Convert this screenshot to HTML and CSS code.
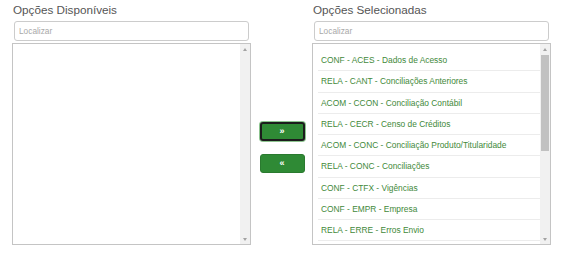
FILE: index.html
```html
<!DOCTYPE html>
<html>
  <head>
    <title>Opções</title>
    <link rel="stylesheet" href="styles.css">
  </head>
  <body>
    <div class="picker">
      <div class="column">
        <h3 class="column-title">Opções Disponíveis</h3>
        <input class="search" type="text" placeholder="Localizar">
        <div class="listbox">
          <ul class="options"></ul>
          <div class="scrollbar">
            <span class="arrow arrow-up"></span>
            <span class="track"></span>
            <span class="arrow arrow-down"></span>
          </div>
        </div>
      </div>
      <div class="moves">
        <button class="move focused">&raquo;</button>
        <button class="move">&laquo;</button>
      </div>
      <div class="column">
        <h3 class="column-title">Opções Selecionadas</h3>
        <input class="search" type="text" placeholder="Localizar">
        <div class="listbox">
          <ul class="options">
            <li>CONF - ACES - Dados de Acesso</li>
            <li>RELA - CANT - Conciliações Anteriores</li>
            <li>ACOM - CCON - Conciliação Contábil</li>
            <li>RELA - CECR - Censo de Créditos</li>
            <li>ACOM - CONC - Conciliação Produto/Titularidade</li>
            <li>RELA - CONC - Conciliações</li>
            <li>CONF - CTFX - Vigências</li>
            <li>CONF - EMPR - Empresa</li>
            <li>RELA - ERRE - Erros Envio</li>
          </ul>
          <div class="scrollbar">
            <span class="arrow arrow-up"></span>
            <span class="track"><span class="thumb"></span></span>
            <span class="arrow arrow-down"></span>
          </div>
        </div>
      </div>
    </div>
  </body>
</html>
```

FILE: styles.css
```css
body{
  margin: 0;
  background-color: white;
  font-family: "Liberation Sans", Arial, sans-serif;
}

.picker{
  display: flex;
  padding: 0 12px;
}

.column{
  width: 239px;
  display: flex;
  flex-direction: column;
}

.column-title{
  margin: 2px 0 3px 1px;
  font-size: 11.7px;
  line-height: 16px;
  font-weight: normal;
  color: #555;
}

.search{
  margin: 0 2px;
  height: 20px;
  box-sizing: border-box;
  padding: 0 4px;
  border: 1px solid #ccc;
  border-radius: 3px;
  font-family: inherit;
  font-size: 8.3px;
  color: #555;
}

.search::placeholder{
  color: #a8a8a8;
}

.listbox{
  margin-top: 2px;
  height: 202px;
  box-sizing: border-box;
  border: 1px solid #c4c4c4;
  display: flex;
  overflow: hidden;
}

.options{
  flex: 1;
  margin: 0;
  padding: 6px 0 0 5px;
  list-style: none;
  overflow: hidden;
}

.options li{
  height: 20.25px;
  line-height: 20.25px;
  padding-left: 3px;
  border-bottom: 1px solid #ececec;
  font-size: 8.4px;
  color: #42893a;
  white-space: nowrap;
}

.scrollbar{
  width: 10px;
  display: flex;
  flex-direction: column;
  background-color: #f1f1f1;
}

.arrow{
  height: 10px;
  display: flex;
  justify-content: center;
  align-items: center;
}

.arrow:before{
  content: "";
  border-left: 2.5px solid transparent;
  border-right: 2.5px solid transparent;
}

.arrow-up:before{
  border-bottom: 3px solid #a3a3a3;
}

.arrow-down:before{
  border-top: 3px solid #a3a3a3;
}

.track{
  flex: 1;
  display: flex;
  flex-direction: column;
}

.thumb{
  height: 96px;
  margin: 1px 1px 0 1px;
  background-color: #c1c1c1;
}

.moves{
  width: 61px;
  display: flex;
  flex-direction: column;
  align-items: center;
  row-gap: 13px;
  padding-top: 122px;
  padding-left: 1px;
  box-sizing: border-box;
}

.move{
  width: 45px;
  height: 19px;
  padding: 0;
  border: 1px solid #2a7a2f;
  border-radius: 3px;
  background-color: #2f8a35;
  color: white;
  font-family: inherit;
  font-size: 9px;
  font-weight: bold;
  line-height: 15px;
}

.move.focused{
  border: 2px solid #1c1c1c;
  box-shadow: 0 0 0 1px #8dc48f;
}
```
